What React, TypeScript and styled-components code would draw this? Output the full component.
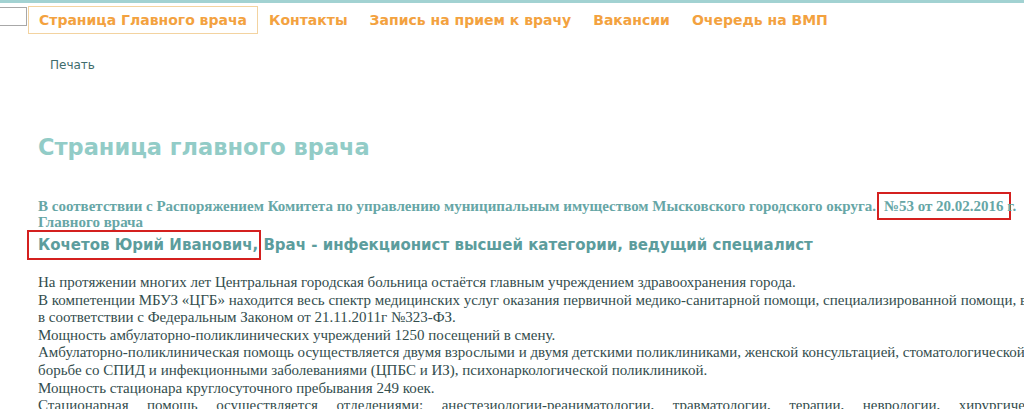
import styled, { createGlobalStyle } from "styled-components";

const GlobalStyle = createGlobalStyle`
  html, body {
    margin: 0;
    padding: 0;
    background: #ffffff;
    overflow: hidden;
  }
  body {
    font-family: "DejaVu Sans", Verdana, sans-serif;
  }
`;

const navItems = [
  { label: "Страница Главного врача", active: true },
  { label: "Контакты", active: false },
  { label: "Запись на прием к врачу", active: false },
  { label: "Вакансии", active: false },
  { label: "Очередь на ВМП", active: false },
];

const App = () => {
  return (
    <Page>
      <GlobalStyle />
      <TopLine />
      <Nav>
        <SearchStub />
        {navItems.map((item) => (
          <NavItem key={item.label} $active={item.active}>
            {item.label}
          </NavItem>
        ))}
      </Nav>
      <PrintLink>Печать</PrintLink>
      <Content>
        <Title>Страница главного врача</Title>
        <Decree>
          <DecreeLine>
            В соответствии с Распоряжением Комитета по управлению муниципальным имуществом
            Мысковского городского округа. <DecreeMark>№53 от 20.02.2016</DecreeMark> г.
          </DecreeLine>
          <DecreeLine>Главного врача</DecreeLine>
        </Decree>
        <DoctorLine>
          <NameMark>Кочетов Юрий Иванович</NameMark>, Врач - инфекционист высшей категории,
          ведущий специалист
        </DoctorLine>
        <Body>
          <Line>
            На протяжении многих лет Центральная городская больница остаётся главным учреждением
            здравоохранения города.
          </Line>
          <Line>
            В компетенции МБУЗ «ЦГБ» находится весь спектр медицинских услуг оказания первичной
            медико-санитарной помощи, специализированной помощи, в том числе высокотехнологичной,
          </Line>
          <Line>в соответствии с Федеральным Законом от 21.11.2011г №323-ФЗ.</Line>
          <Line>Мощность амбулаторно-поликлинических учреждений 1250 посещений в смену.</Line>
          <Line>
            Амбулаторно-поликлиническая помощь осуществляется двумя взрослыми и двумя детскими
            поликлиниками, женской консультацией, стоматологической поликлиникой, центром по
          </Line>
          <Line>
            борьбе со СПИД и инфекционными заболеваниями (ЦПБС и ИЗ), психонаркологической
            поликлиникой.
          </Line>
          <Line>Мощность стационара круглосуточного пребывания 249 коек.</Line>
          <JustifiedLine>
            Стационарная помощь осуществляется отделениями: анестезиологии-реаниматологии,
            травматологии, терапии, неврологии, хирургического,
          </JustifiedLine>
        </Body>
      </Content>
    </Page>
  );
};

export default App;

const Page = styled.div`
  width: 1024px;
  height: 409px;
  overflow: hidden;
  position: relative;
`;

const TopLine = styled.div`
  height: 3px;
  background: #a2d2d2;
`;

const Nav = styled.nav`
  display: flex;
  align-items: center;
  margin-top: 3px;
  height: 28px;
`;

const SearchStub = styled.div`
  align-self: flex-start;
  width: 26px;
  height: 17px;
  margin: 1px 1px 0 0;
  border: 1px solid #a8a8a8;
  border-left: none;
  background: #fff;
`;

const NavItem = styled.a<{ $active: boolean }>`
  display: flex;
  align-items: center;
  box-sizing: border-box;
  height: 28px;
  padding: 0 10px;
  border: 1px solid ${({ $active }) => ($active ? "#f3d3a0" : "transparent")};
  color: #f3a23f;
  font-size: 14px;
  font-weight: bold;
  white-space: nowrap;
  cursor: pointer;
`;

const PrintLink = styled.div`
  margin: 24px 0 0 50px;
  font-size: 12px;
  color: #3f6c6c;
`;

const Content = styled.div`
  padding-left: 38px;
  width: 1200px;
`;

const Title = styled.h1`
  margin: 60px 0 0;
  font-size: 22.5px;
  font-weight: bold;
  line-height: 30px;
  color: #92ccc7;
`;

const Decree = styled.div`
  margin-top: 36px;
  font-family: "Liberation Serif", "Times New Roman", serif;
  font-size: 15px;
  font-weight: bold;
  color: #66a6a6;
`;

const DecreeLine = styled.div`
  height: 16px;
  line-height: 16px;
  white-space: nowrap;
`;

const DecreeMark = styled.span`
  padding: 4px 5px;
  margin: 0 -7px 0 -3px;
  border: 2px solid #d4201f;
`;

const DoctorLine = styled.div`
  margin-top: 5px;
  font-size: 15px;
  font-weight: bold;
  line-height: 20px;
  color: #5c9d9d;
  white-space: nowrap;
`;

const NameMark = styled.span`
  padding: 4px 7px 4px 9px;
  margin: 0 -9px 0 -11px;
  border: 2px solid #d4201f;
`;

const Body = styled.div`
  margin-top: 19px;
  font-family: "Liberation Serif", "Times New Roman", serif;
  font-size: 15px;
  line-height: 17.6px;
  color: #334d4d;
`;

const Line = styled.div`
  white-space: nowrap;
`;

const JustifiedLine = styled.div`
  width: 1025px;
  text-align: justify;
  text-align-last: justify;
`;
